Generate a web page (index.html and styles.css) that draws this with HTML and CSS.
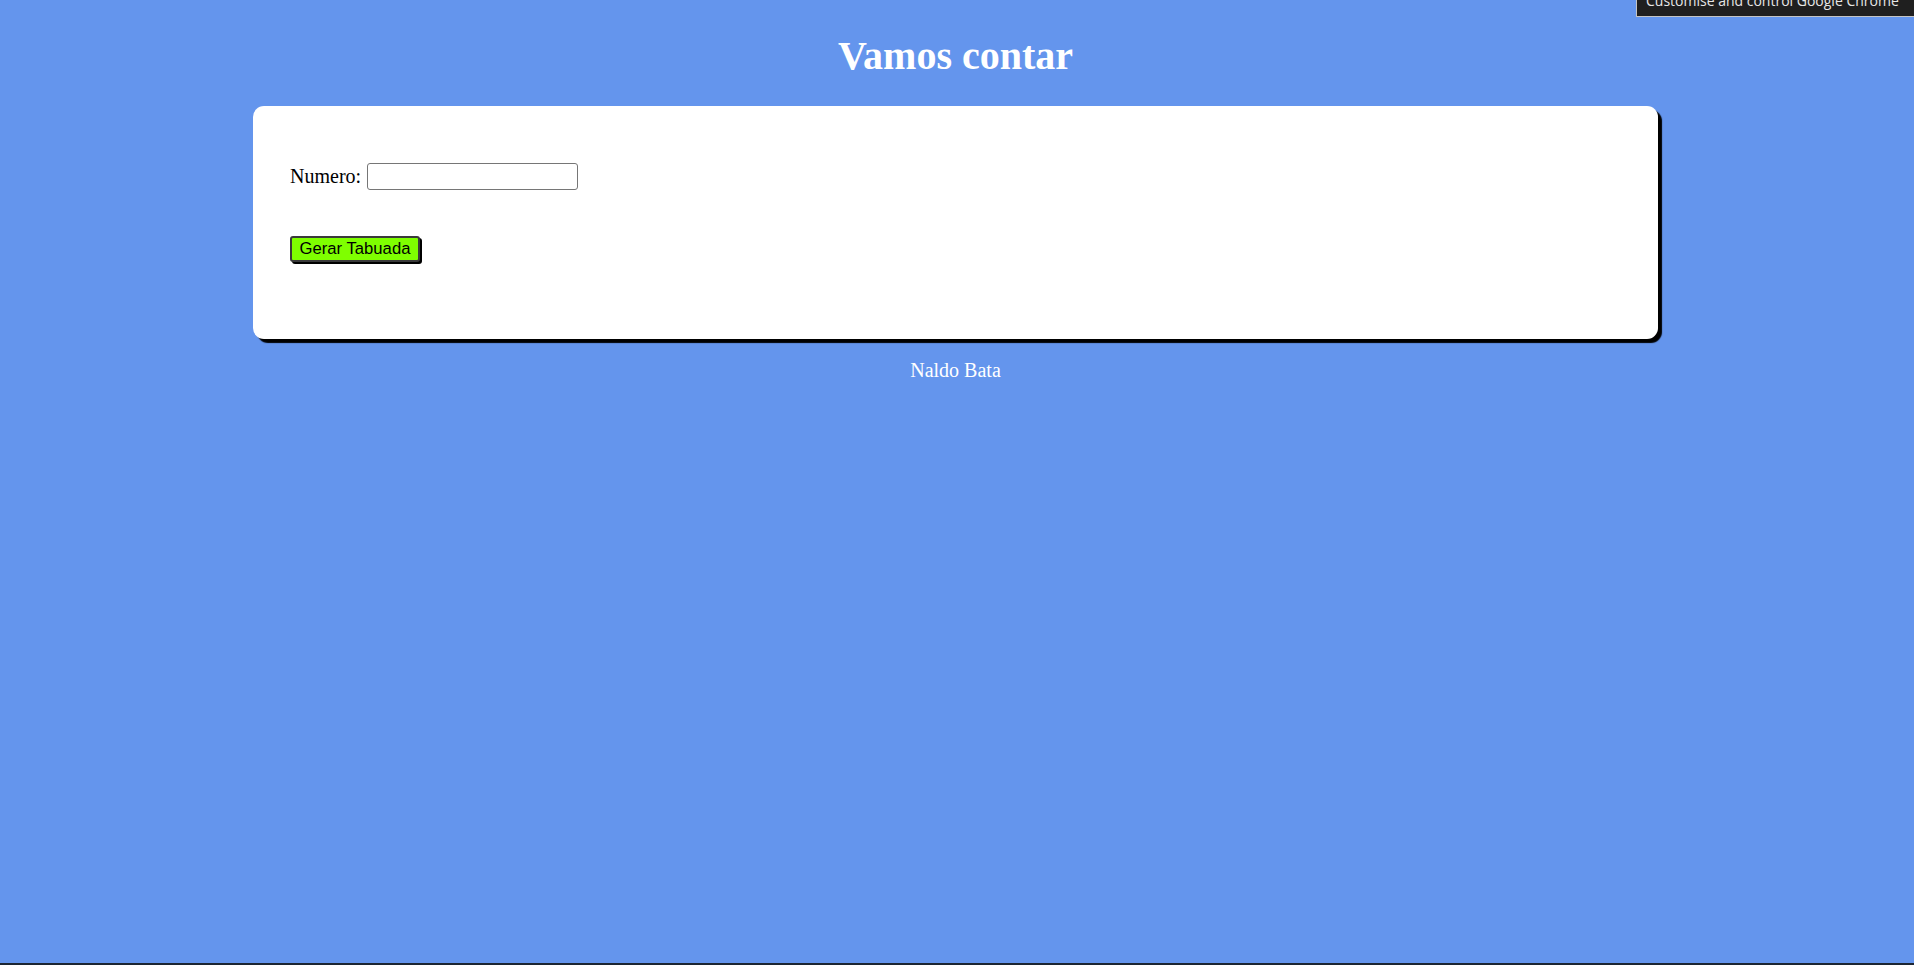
FILE: index.html
```html
<!DOCTYPE html>
<html lang="pt">
<head>
<meta charset="utf-8">
<title>Vamos contar</title>
<link rel="stylesheet" href="styles.css">
</head>
<body>
<header class="header">
  <h1 class="title">Vamos contar</h1>
</header>
<section class="card">
  <div class="row">
    <label class="label" for="num">Numero:</label>
    <input class="field" type="number" id="num">
  </div>
  <div class="row">
    <button class="btn" type="button">Gerar Tabuada</button>
  </div>
</section>
<footer class="footer">Naldo Bata</footer>
<div class="tip"><span class="tip-text">Customise and control Google Chrome</span></div>
<div class="edge"></div>
</body>
</html>
```
FILE: styles.css
```css
html, body {
  margin: 0;
  padding: 0;
}
body {
  background: #6495ed;
  font-family: "Liberation Serif", "Times New Roman", serif;
  font-size: 20px;
  min-height: 965px;
  padding-right: 3px;
}
.header {
  padding-top: 33px;
  margin-bottom: 27px;
}
.title {
  margin: 0;
  font-size: 40px;
  line-height: 46px;
  font-weight: bold;
  color: #ffffff;
  text-align: center;
}
.card {
  box-sizing: border-box;
  width: 1405px;
  margin: 0 auto;
  background: #ffffff;
  border-radius: 11px;
  box-shadow: 4px 4px 1px #000000;
  padding: 57px 37px 77px;
  display: flex;
  flex-direction: column;
  align-items: flex-start;
  gap: 46px;
}
.row {
  display: flex;
  align-items: center;
}
.label {
  color: #000;
  font-size: 20px;
  line-height: 23px;
  margin-right: 6px;
}
.field {
  box-sizing: border-box;
  width: 211px;
  height: 27px;
  border: 1px solid #767676;
  border-radius: 3px;
  padding: 1px 3px;
  font-size: 16px;
  background: #fff;
  -moz-appearance: textfield;
}
.field::-webkit-outer-spin-button,
.field::-webkit-inner-spin-button {
  -webkit-appearance: none;
  margin: 0;
}
.btn {
  box-sizing: border-box;
  width: 130px;
  height: 26px;
  padding: 0;
  background: #7fff00;
  border: 2px solid #3a3a3a;
  border-radius: 3px;
  box-shadow: 2px 2px 0 #000000;
  font-family: "Liberation Sans", Arial, sans-serif;
  font-size: 16.67px;
  color: #000;
  line-height: 20px;
}
.footer {
  margin-top: 20px;
  text-align: center;
  color: #ffffff;
  font-size: 20px;
  line-height: 23px;
}
.tip {
  position: absolute;
  top: 0;
  right: 0;
  width: 277px;
  height: 16px;
  background: #1f1f1f;
  border-left: 1px solid #c4c4c4;
  border-bottom: 1px solid #c4c4c4;
  overflow: hidden;
}
.tip-text {
  display: block;
  margin-top: -9px;
  padding-left: 9px;
  line-height: 20px;
  font-family: "Open Sans", "Noto Sans", sans-serif;
  font-size: 14px;
  color: #e6e6e6;
  white-space: nowrap;
}
.edge {
  position: fixed;
  left: 0;
  right: 0;
  bottom: 0;
  height: 2px;
  background: #1c2633;
}
```
